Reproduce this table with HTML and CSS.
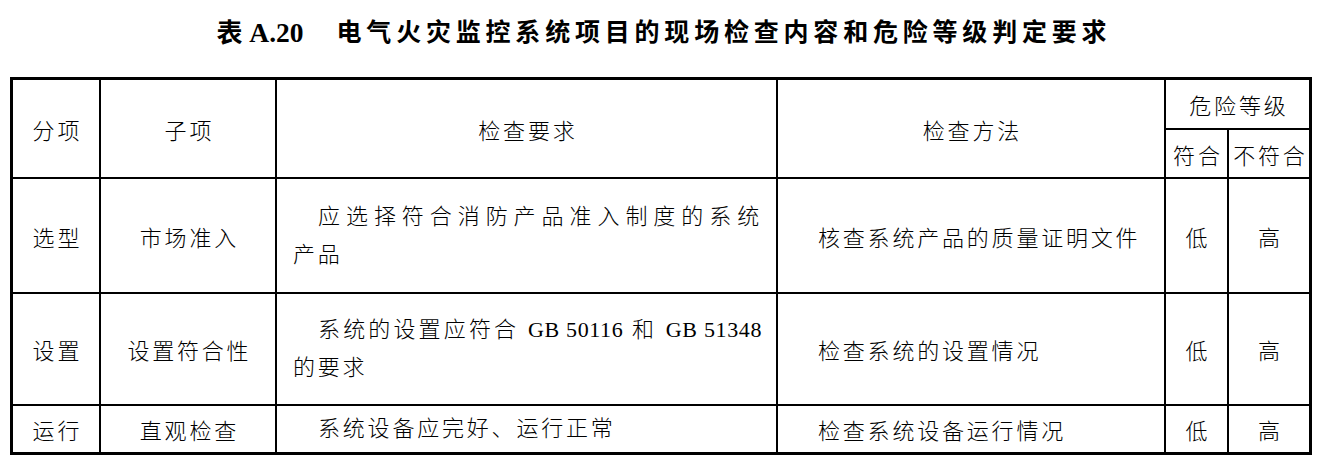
FILE: index.html
```html
<!DOCTYPE html>
<html lang="zh-CN">
<head>
<meta charset="utf-8">
<title>表 A.20</title>
<link rel="stylesheet" href="styles.css">
</head>
<body>
<div class="title"><span class="t-label"><span class="t-cjk">表</span> A.20</span><span class="t-text">电气火灾监控系统项目的现场检查内容和危险等级判定要求</span></div>
<div class="table">
  <div class="cell c span-r2">分项</div>
  <div class="cell c span-r2">子项</div>
  <div class="cell c span-r2">检查要求</div>
  <div class="cell c span-r2">检查方法</div>
  <div class="cell c span-c2">危险等级</div>
  <div class="cell c">符合</div>
  <div class="cell c">不符合</div>

  <div class="cell c">选型</div>
  <div class="cell c">市场准入</div>
  <div class="cell req"><div class="para"><span class="line first">应选择符合消防产品准入制度的系统</span><span class="line">产品</span></div></div>
  <div class="cell method">核查系统产品的质量证明文件</div>
  <div class="cell c">低</div>
  <div class="cell c">高</div>

  <div class="cell c">设置</div>
  <div class="cell c">设置符合性</div>
  <div class="cell req"><div class="para"><span class="line first">系统的设置应符合 <span class="lat">GB 50116</span> 和 <span class="lat">GB 51348</span></span><span class="line">的要求</span></div></div>
  <div class="cell method">检查系统的设置情况</div>
  <div class="cell c">低</div>
  <div class="cell c">高</div>

  <div class="cell c">运行</div>
  <div class="cell c">直观检查</div>
  <div class="cell req"><div class="para"><span class="line indent">系统设备应完好、运行正常</span></div></div>
  <div class="cell method">检查系统设备运行情况</div>
  <div class="cell c">低</div>
  <div class="cell c">高</div>
</div>
</body>
</html>
```
FILE: styles.css
```css
html, body {
  margin: 0;
  padding: 0;
  background: #fff;
  color: #000;
}
body {
  width: 1327px;
  height: 473px;
  overflow: hidden;
}
.title {
  height: 60px;
  display: flex;
  align-items: center;
  justify-content: center;
  padding-right: 4px;
  font-weight: bold;
  white-space: nowrap;
}
.t-label {
  font-family: "Liberation Serif", "Noto Sans CJK SC", serif;
  font-size: 27.5px;
}
.t-cjk {
  font-family: "Noto Sans CJK SC", sans-serif;
  font-size: 26px;
}
.t-text {
  font-family: "Noto Sans CJK SC", sans-serif;
  font-size: 25px;
  letter-spacing: 4.8px;
  margin-left: 33px;
  margin-right: -4.8px;
}
.table {
  margin-top: 17px;
  margin-left: 10px;
  width: max-content;
  display: grid;
  grid-template-columns: 86px 174px 499px 386px 61px 80px;
  grid-template-rows: 48px 47px 113px 110px 46px;
  gap: 2px;
  background: #000;
  border: 3px solid #000;
  font-family: "Liberation Serif", "Noto Sans CJK SC", serif;
  font-size: 22px;
  font-weight: 300;
  letter-spacing: 2.8px;
}
.cell {
  background: #fff;
  display: flex;
  align-items: center;
  white-space: nowrap;
}
.c {
  justify-content: center;
  padding-left: 2.8px;
}
.span-r2 {
  grid-row: span 2;
}
.span-c2 {
  grid-column: span 2;
}
.req {
  padding: 0 14px 0 16px;
}
.para {
  width: 100%;
  display: flex;
  flex-direction: column;
}
.line {
  display: block;
  line-height: 38px;
}
.first {
  padding-left: 25px;
  text-align: justify;
  text-align-last: justify;
}
.indent {
  padding-left: 25px;
}
.lat {
  letter-spacing: 0.6px;
}
.method {
  padding-left: 40px;
}
```
